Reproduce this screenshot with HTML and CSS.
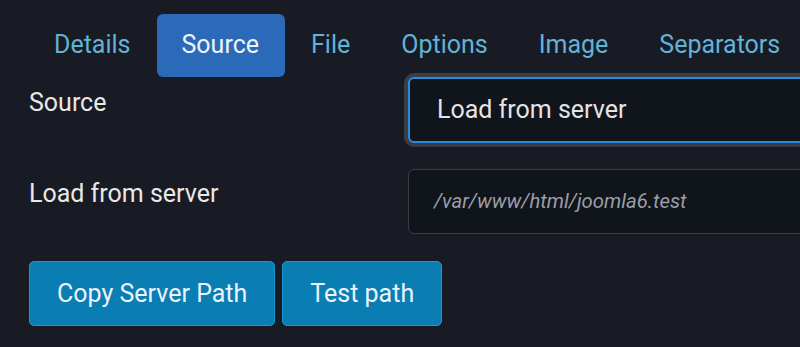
FILE: index.html
```html
<!DOCTYPE html>
<html>
<head>
<meta charset="utf-8">
<link rel="stylesheet" href="styles.css">
</head>
<body>
<div class="page">
  <nav class="tabs">
    <span class="tab">Details</span>
    <span class="tab active">Source</span>
    <span class="tab">File</span>
    <span class="tab">Options</span>
    <span class="tab">Image</span>
    <span class="tab">Separators</span>
  </nav>
  <div class="form">
    <div class="row row-select">
      <label class="label">Source</label>
      <div class="control">
        <div class="select">Load from server</div>
      </div>
    </div>
    <div class="row row-input">
      <label class="label">Load from server</label>
      <div class="control">
        <div class="input">/var/www/html/joomla6.test</div>
      </div>
    </div>
    <div class="buttons">
      <button class="btn btn-copy">Copy Server Path</button>
      <button class="btn btn-test">Test path</button>
    </div>
  </div>
</div>
</body>
</html>
```
FILE: styles.css
```css
html, body {
  margin: 0;
  padding: 0;
  background: #181b23;
  overflow: hidden;
}
body {
  width: 800px;
  height: 347px;
  font-family: Roboto, "Liberation Sans", sans-serif;
  font-size: 25px;
  color: #e6e6e6;
}
.page {
  padding: 14px 0 0 29px;
}
.tabs {
  display: flex;
  gap: 1px;
  height: 63px;
  white-space: nowrap;
}
.tab {
  display: block;
  padding: 0 25px;
  line-height: 62px;
  color: #62b3d8;
  border-radius: 6px;
}
.tab.active {
  background: #2b6ab8;
  color: #eef3fa;
  padding: 0 26px 0 25px;
}
.form {
  display: flex;
  flex-direction: column;
}
.row {
  display: grid;
  grid-template-columns: 379px 392px;
}
.label {
  display: block;
  line-height: 36px;
  color: #e8e8e8;
}
.row-select .label { padding-top: 8px; }
.row-input { margin-top: 26px; }
.row-input .label { padding-top: 7px; }
.control {
  margin: -4px 0 -4px -4px;
  padding: 4px 0 4px 4px;
  overflow: hidden;
}
.select {
  box-sizing: border-box;
  width: 420px;
  height: 66px;
  line-height: 62px;
  padding-left: 27px;
  border: 2px solid #2a8ae0;
  border-radius: 6px;
  background: #10141b;
  color: #e4e4e4;
  box-shadow: 0 0 0 4px #3a3d45;
  white-space: nowrap;
}
.input {
  box-sizing: border-box;
  width: 420px;
  height: 65px;
  line-height: 63px;
  padding-left: 25px;
  border: 1px solid #3a3d44;
  border-radius: 6px;
  background: #10141b;
  color: #9b9fa6;
  font-size: 20.3px;
  font-style: italic;
  white-space: nowrap;
}
.buttons {
  display: flex;
  gap: 7px;
  margin-top: 27px;
}
.btn {
  box-sizing: border-box;
  height: 65px;
  padding: 0 27px;
  font-family: Roboto, "Liberation Sans", sans-serif;
  font-size: 25px;
  color: #eaf4fa;
  background: #0a7db3;
  border: 1px solid #1a98d6;
  border-radius: 5px;
}
```
